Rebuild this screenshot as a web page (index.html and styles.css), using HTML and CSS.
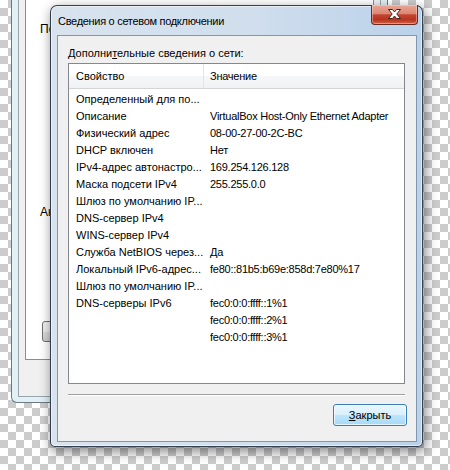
FILE: index.html
```html
<!DOCTYPE html>
<html>
<head>
    <meta charset="utf-8">
    <title>Сведения о сетевом подключении</title>
    <link rel="stylesheet" href="styles.css">
</head>
<body>
    <div class="desktop">

        <!-- Parent window (status dialog), mostly hidden behind the details dialog -->
        <div class="window back-window">
            <div class="back-client">
                <div class="back-tab">
                    <div class="back-label">По</div>
                    <div class="back-label second">Ак</div>
                    <button class="back-btn"></button>
                </div>
            </div>
        </div>

        <!-- Network connection details dialog -->
        <div class="window dialog">
            <div class="titlebar">
                <span class="title">Сведения о сетевом подключении</span>
                <button class="close-btn" title="Закрыть">
                    <svg width="47" height="20" viewBox="0 0 47 20">
                        <path d="M17.5 5.5 L21.5 5.5 L23.5 8 L25.5 5.5 L29.5 5.5 L25.8 10 L29.5 14.5 L25.5 14.5 L23.5 12 L21.5 14.5 L17.5 14.5 L21.2 10 Z"
                              fill="#ffffff" stroke="#4a2119" stroke-width="1" stroke-linejoin="round"/>
                    </svg>
                </button>
            </div>

            <div class="client">
                <div class="caption">Дополни<u>т</u>ельные сведения о сети:</div>

                <div class="listview">
                    <div class="lv-header">
                        <div class="col-prop">Свойство</div>
                        <div class="col-val">Значение</div>
                    </div>
                    <div class="lv-body">
                        <div class="lv-row"><div class="col-prop">Определенный для по...</div><div class="col-val"></div></div>
                        <div class="lv-row"><div class="col-prop">Описание</div><div class="col-val">VirtualBox Host-Only Ethernet Adapter</div></div>
                        <div class="lv-row"><div class="col-prop">Физический адрес</div><div class="col-val">08-00-27-00-2C-BC</div></div>
                        <div class="lv-row"><div class="col-prop">DHCP включен</div><div class="col-val">Нет</div></div>
                        <div class="lv-row"><div class="col-prop">IPv4-адрес автонастро...</div><div class="col-val">169.254.126.128</div></div>
                        <div class="lv-row"><div class="col-prop">Маска подсети IPv4</div><div class="col-val">255.255.0.0</div></div>
                        <div class="lv-row"><div class="col-prop">Шлюз по умолчанию IP...</div><div class="col-val"></div></div>
                        <div class="lv-row"><div class="col-prop">DNS-сервер IPv4</div><div class="col-val"></div></div>
                        <div class="lv-row"><div class="col-prop">WINS-сервер IPv4</div><div class="col-val"></div></div>
                        <div class="lv-row"><div class="col-prop">Служба NetBIOS через...</div><div class="col-val">Да</div></div>
                        <div class="lv-row"><div class="col-prop">Локальный IPv6-адрес...</div><div class="col-val">fe80::81b5:b69e:858d:7e80%17</div></div>
                        <div class="lv-row"><div class="col-prop">Шлюз по умолчанию IP...</div><div class="col-val"></div></div>
                        <div class="lv-row"><div class="col-prop">DNS-серверы IPv6</div><div class="col-val">fec0:0:0:ffff::1%1</div></div>
                        <div class="lv-row"><div class="col-prop"></div><div class="col-val">fec0:0:0:ffff::2%1</div></div>
                        <div class="lv-row"><div class="col-prop"></div><div class="col-val">fec0:0:0:ffff::3%1</div></div>
                    </div>
                </div>

                <div class="separator"></div>

                <div class="footer">
                    <button class="btn-default"><u>З</u>акрыть</button>
                </div>
            </div>
        </div>

    </div>
</body>
</html>
```

FILE: styles.css
```css
* {
    box-sizing: border-box;
}

/* Transparent canvas shown as a checkerboard */
body {
    margin: 0;
    width: 450px;
    height: 470px;
    overflow: hidden;
    font-family: "Liberation Sans", Arial, sans-serif;
    font-size: 11px;
    color: #000;
    background-color: #fff;
    background-image: repeating-conic-gradient(#cccccc 0 25%, #ffffff 0 50%);
    background-size: 16px 16px;
}

.desktop {
    position: relative;
    width: 450px;
    height: 470px;
}

.window {
    position: absolute;
}

/* Parent window */
.back-window {
    left: 11px;
    top: -40px;
    width: 377px;
    height: 443px;
    display: flex;
    padding: 29px 6px 5px 6px;
    border: 1px solid rgba(60, 70, 80, 0.7);
    border-radius: 6px;
    background: #e2f1f5;
}

.back-client {
    flex: 1;
    padding: 4px 6px 0 6px;
    border: 1px solid #9aa4ad;
    background: #f0f0f0;
}

.back-tab {
    height: 365px;
    padding: 26px 14px 0 14px;
    border: 1px solid #898c95;
    background: #fff;
}

.back-label {
    font-size: 12px;
    line-height: 15px;
    white-space: nowrap;
}

.back-label.second {
    margin-top: 168px;
}

.back-btn {
    display: block;
    width: 90px;
    height: 21px;
    margin: 101px 0 0 2px;
    border: 1px solid #707070;
    border-radius: 3px;
    background: linear-gradient(#f2f2f2, #ebebeb 50%, #dddddd 50%, #cfcfcf);
}

/* Details dialog frame */
.dialog {
    left: 50px;
    top: 5px;
    width: 373px;
    height: 442px;
    display: flex;
    flex-direction: column;
    padding: 0 5px 4px 6px;
    border: 1px solid rgba(25, 35, 50, 0.85);
    border-radius: 7px 7px 5px 5px;
    background: linear-gradient(to right, #d8e3ee 0%, #d0deed 55%, #bad1ea 100%);
    box-shadow: 2px 4px 12px 1px rgba(0, 0, 0, 0.45),
                inset 0 0 0 1px rgba(255, 255, 255, 0.55);
}

.titlebar {
    height: 29px;
    display: flex;
    align-items: center;
    padding-left: 1px;
}

.title {
    font-size: 11px;
    letter-spacing: -0.3px;
    white-space: nowrap;
}

.close-btn {
    align-self: flex-start;
    width: 47px;
    height: 20px;
    margin: -1px -1px 0 auto;
    padding: 0;
    border: 1px solid #6a2a20;
    border-top: none;
    border-radius: 0 0 4px 4px;
    background: linear-gradient(#e9a797 0%, #dc8774 45%, #c24530 52%, #b8341f 78%, #d06447 100%);
    box-shadow: inset 0 0 0 1px rgba(255, 220, 210, 0.45);
}

.close-btn svg {
    display: block;
    margin: -1px 0 0 -1px;
}

/* Client area */
.client {
    flex: 1;
    display: flex;
    flex-direction: column;
    padding: 10px 9px 0 10px;
    border: 1px solid #8097b2;
    background: #f0f0f0;
}

.caption {
    height: 15px;
    line-height: 15px;
    white-space: nowrap;
}

/* List view */
.listview {
    width: 337px;
    height: 321px;
    margin-top: 2px;
    border: 1px solid #828790;
    background: #fff;
    overflow: hidden;
}

.lv-header {
    display: flex;
    height: 25px;
    border-bottom: 1px solid #d5d5d5;
    background: linear-gradient(#ffffff, #ffffff 50%, #f6f7f8 50%, #f1f2f4);
}

.lv-header .col-prop {
    border-right: 1px solid #e3e4e6;
}

.col-prop,
.col-val {
    display: flex;
    align-items: center;
    white-space: nowrap;
    overflow: hidden;
}

.col-prop {
    width: 135px;
    padding-left: 7px;
}

.col-val {
    flex: 1;
    padding-left: 6px;
    letter-spacing: -0.25px;
}

.lv-body {
    padding-top: 1px;
}

.lv-row {
    display: flex;
    height: 17px;
}

.separator {
    width: 337px;
    height: 2px;
    margin-top: 10px;
    border-top: 1px solid #a0a0a0;
    border-bottom: 1px solid #ffffff;
}

.footer {
    display: flex;
    justify-content: flex-end;
}

/* Default push button */
.btn-default {
    width: 74px;
    height: 22px;
    margin-top: 8px;
    padding: 0;
    border: 1px solid #3c7fb1;
    border-radius: 3px;
    background: linear-gradient(#eaf6fd, #d9f0fc 50%, #bee6fd 50%, #a7d9f5);
    box-shadow: inset 0 0 0 1px rgba(255, 255, 255, 0.7);
    font: 11px "Liberation Sans", Arial, sans-serif;
    color: #000;
}
```
